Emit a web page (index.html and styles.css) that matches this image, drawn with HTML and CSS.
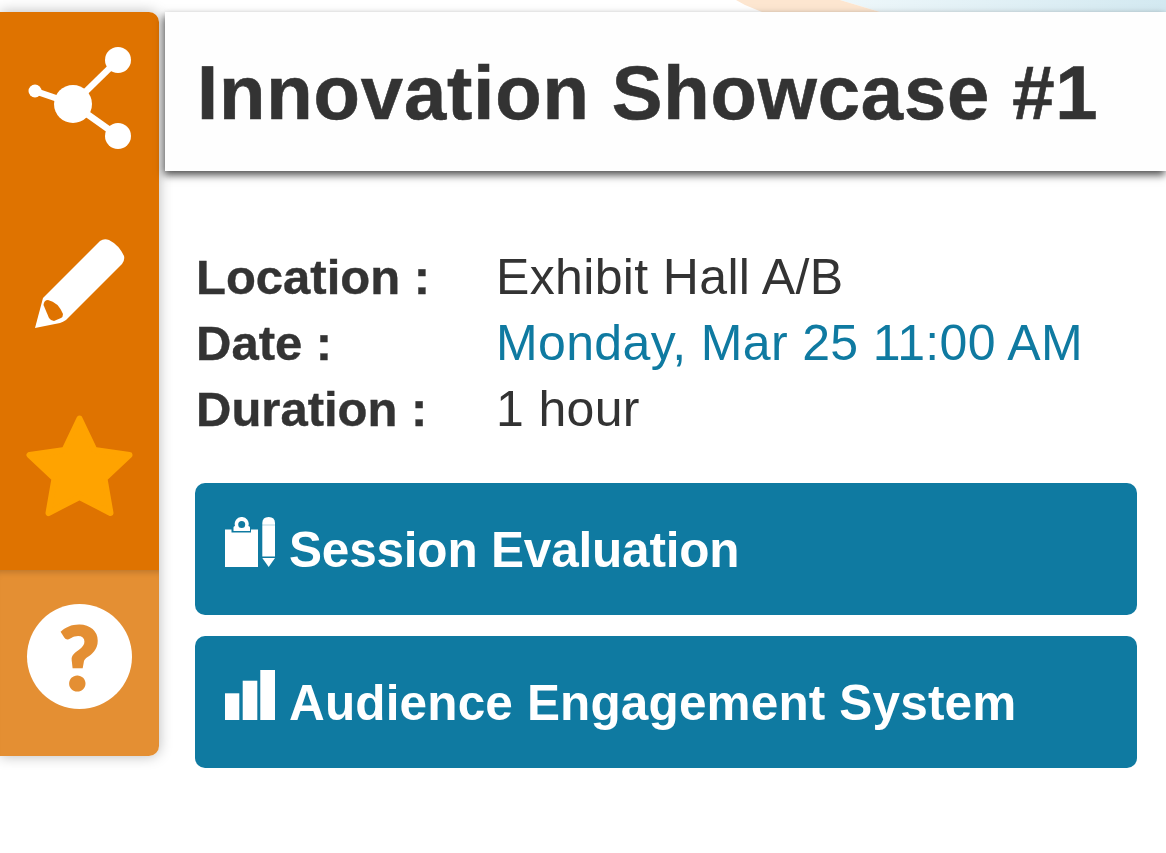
FILE: index.html
```html
<!DOCTYPE html>
<html lang="en">
<head>
<meta charset="utf-8">
<title>Innovation Showcase #1</title>
<link rel="stylesheet" href="styles.css">
</head>
<body>
<svg class="strip" width="1166" height="12" viewBox="0 0 1166 12" aria-hidden="true">
  <defs>
    <linearGradient id="sky" x1="0" x2="1" y1="0" y2="0"><stop offset="0" stop-color="#eef7fa"/><stop offset="1" stop-color="#d3e9f1"/></linearGradient>
  </defs>
  <polygon points="840,0 1166,0 1166,12 880,12" fill="url(#sky)"/>
  <polygon points="736,0 840,0 880,12 762,12 745,5" fill="#fde6d0"/>
</svg>
<div class="page">
  <nav class="rail">
    <div class="rail-main">
      <svg class="rail-icon" width="110" height="106" viewBox="25 45 110 106" aria-hidden="true">
        <g fill="#fff"><circle cx="73" cy="104" r="19"/><circle cx="118" cy="60" r="13"/><circle cx="118" cy="136" r="13"/><circle cx="35" cy="91" r="6.500"/></g>
        <g stroke="#fff" stroke-width="6.500"><line x1="73" y1="104" x2="118" y2="60"/><line x1="73" y1="104" x2="118" y2="136"/><line x1="73" y1="104" x2="35" y2="91"/></g>
      </svg>
      <svg class="rail-icon gap-pencil" width="110" height="97" viewBox="25 235 110 97" aria-hidden="true">
        <path fill="#fff" d="M35 328 L43 298 L100 241 Q104 238 109 240 Q119 245 124 256 Q125 260 122 264 L66 320 Q63 322 60 323 Z"/>
        <path fill="#df7300" d="M43.500 305 Q44 300 48 300 Q58 302 63 314 Q63 317 61 318 L54 321 Q51 321 49 318 Z"/>
      </svg>
      <svg class="rail-icon gap-star" width="110" height="106" viewBox="25 413 110 106" aria-hidden="true">
        <polygon fill="#ffa300" stroke="#ffa300" stroke-width="6" stroke-linejoin="round" points="79.500,418.500 94.500,450 129.500,455 104.500,478.500 110.500,513 79.500,497 48.500,513 54.500,478.500 29.500,455 64.500,450"/>
      </svg>
    </div>
    <div class="rail-help"><span class="help-disc">?</span></div>
  </nav>
  <main class="content">
    <header class="head"><h1 class="title">Innovation Showcase #1</h1></header>
    <dl class="facts">
      <dt>Location :</dt><dd>Exhibit Hall A/B</dd>
      <dt>Date :</dt><dd class="link">Monday, Mar 25 11:00 AM</dd>
      <dt>Duration :</dt><dd>1 hour</dd>
    </dl>
    <a class="btn btn-tight">
      <svg class="btn-icon" width="50" height="50" viewBox="225 517 50 50" aria-hidden="true">
        <path fill="#fff" d="M225 529.500 H231.500 V532.500 H251 V529.500 H258 V567 H225 Z"/>
        <path fill="#fff" fill-rule="evenodd" d="M233.500 531 V527.500 Q233.500 526 235 526 A7 7 0 1 1 248.400 526 Q250 526 250 527.500 V531 Z M241.700 521 A3.500 3.500 0 1 0 241.700 528 A3.500 3.500 0 1 0 241.700 521 Z"/>
        <path fill="#fff" d="M262.300 523 Q262.300 517 268.700 517 Q275 517 275 523 V556.500 H262.300 Z"/>
        <path fill="#fff" d="M262.300 558 H275 L268.700 567 Z"/>
        <line x1="262" y1="525" x2="275" y2="525" stroke="#0f7aa1" stroke-opacity=".3"/>
      </svg><span>Session Evaluation</span>
    </a>
    <a class="btn btn-loose">
      <svg class="btn-icon" width="50" height="50" viewBox="225 670 50 50" aria-hidden="true">
        <rect fill="#fff" x="225" y="693.300" width="14.300" height="26.700"/>
        <rect fill="#fff" x="242.700" y="680.700" width="14.600" height="39.300"/>
        <rect fill="#fff" x="260.300" y="670" width="14.700" height="50"/>
      </svg><span>Audience Engagement System</span>
    </a>
  </main>
</div>
</body>
</html>
```
FILE: styles.css
```css
html, body { margin: 0; height: 100%; background: #fff; }
body { font-family: "Liberation Sans", Arial, sans-serif; color: #333; overflow: hidden; }
.strip { display: block; }
.page { display: flex; }
.rail { width: 159px; height: 744px; display: flex; flex-direction: column; border-radius: 0 10px 10px 0; box-shadow: 0 0 14px rgba(0,0,0,.28); overflow: hidden; flex: none; position: relative; }
.rail-main { height: 558px; background: #df7300; display: flex; flex-direction: column; align-items: center; padding-top: 33px; box-sizing: border-box; }
.rail-icon { display: block; flex: none; }
.gap-pencil { margin-top: 84px; }
.gap-star { margin-top: 81px; }
.rail-help { flex: 1; background: #e48f33; box-shadow: inset 0 7px 6px -5px rgba(0,0,0,.18); display: flex; justify-content: center; padding-top: 34px; }
.help-disc { width: 105px; height: 105px; border-radius: 50%; background: #fff; color: #e48f33; font-family: Lato, "Liberation Sans", sans-serif; font-weight: 900; font-size: 88px; line-height: 105px; text-align: center; -webkit-text-stroke: 2px #e48f33; }
.content { flex: 1; margin-left: 6px; min-width: 0; }
.head { height: 159px; background: #fefefe; box-shadow: -1px 4px 8px rgba(0,0,0,.7); padding-left: 32px; display: flex; align-items: center; position: relative; }
.title { margin: 2px 0 0; font-size: 76px; letter-spacing: .85px; -webkit-text-stroke: .6px #333; }
.facts { margin: 73px 0 41px 31px; display: grid; grid-template-columns: 300px 1fr; font-size: 50px; line-height: 66px; }
.facts dt { font-weight: 700; font-size: 49px; -webkit-text-stroke: .4px #333; }
.facts dd { margin: 0; letter-spacing: .35px; }
.link { color: #0f7aa1; }
.btn { display: flex; align-items: flex-start; margin: 21px 29px 0 30px; height: 132px; box-sizing: border-box; border-radius: 10px; background: #0f7aa1; color: #fff; font-weight: 700; font-size: 49.500px; padding: 34px 0 0 30px; }
.btn-tight { letter-spacing: -.2px; }
.btn-loose { letter-spacing: .15px; }
.btn-icon { flex: none; display: block; }
.btn span { margin-left: 14px; line-height: 66px; }
```
